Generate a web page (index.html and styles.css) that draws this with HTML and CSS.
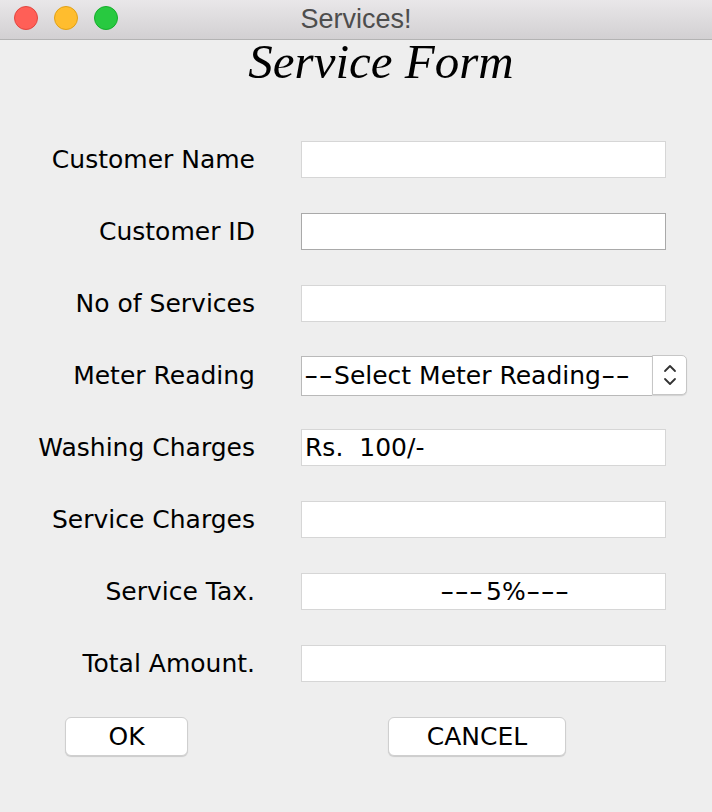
FILE: index.html
```html
<!DOCTYPE html>
<html lang="en">
<head>
    <meta charset="UTF-8">
    <meta name="viewport" content="width=device-width, initial-scale=1.0">
    <title>Services!</title>
    <link rel="stylesheet" href="styles.css">
</head>
<body>
    <div class="window">
        <div class="titlebar">
            <div class="lights">
                <span class="light red"></span>
                <span class="light yellow"></span>
                <span class="light green"></span>
            </div>
            <div class="window-title">Services!</div>
        </div>

        <h1 class="form-title">Service Form</h1>

        <form class="service-form">
            <label for="custName">Customer Name</label>
            <input type="text" id="custName" class="field">

            <label for="custId">Customer ID</label>
            <input type="text" id="custId" class="field focused">

            <label for="numServices">No of Services</label>
            <input type="text" id="numServices" class="field">

            <label for="meter">Meter Reading</label>
            <div class="combo" id="meter">
                <span class="combo-value"><span class="dash">--</span>Select Meter Reading<span class="dash">--</span></span>
                <span class="combo-arrow">
                    <svg width="14" height="26" viewBox="0 0 14 26">
                        <path d="M2 9 L7 4 L12 9" fill="none" stroke="#333" stroke-width="1.8" stroke-linecap="round" stroke-linejoin="round"/>
                        <path d="M2 17 L7 22 L12 17" fill="none" stroke="#333" stroke-width="1.8" stroke-linecap="round" stroke-linejoin="round"/>
                    </svg>
                </span>
            </div>

            <label for="washing">Washing Charges</label>
            <input type="text" id="washing" class="field" value="Rs.  100/-">

            <label for="serviceCharges">Service Charges</label>
            <input type="text" id="serviceCharges" class="field">

            <label for="tax">Service Tax.</label>
            <div class="field tax" id="tax"><span class="dash">---</span>5%<span class="dash">---</span></div>

            <label for="total">Total Amount.</label>
            <input type="text" id="total" class="field">
        </form>

        <div class="actions">
            <button type="button" class="btn btn-ok">OK</button>
            <button type="button" class="btn btn-cancel">CANCEL</button>
        </div>
    </div>
</body>
</html>
```

FILE: styles.css
```css
body {
    margin: 0;
    background-color: #eeeeee;
    font-family: "DejaVu Sans", sans-serif;
    color: #000;
}
.window {
    width: 712px;
    height: 812px;
    background-color: #eeeeee;
}
.titlebar {
    position: relative;
    height: 39px;
    background: linear-gradient(#e9e7e9, #d2d0d2);
    border-bottom: 1px solid #b3b3b3;
    display: flex;
    align-items: center;
    justify-content: center;
}
.lights {
    position: absolute;
    left: 14px;
    top: 6px;
    display: flex;
    gap: 16px;
}
.light {
    width: 24px;
    height: 24px;
    border-radius: 50%;
    box-sizing: border-box;
}
.red {
    background: #ff5f57;
    border: 1px solid #e2463f;
}
.yellow {
    background: #ffbd2e;
    border: 1px solid #e1a116;
}
.green {
    background: #28c940;
    border: 1px solid #14ae2a;
}
.window-title {
    font-family: "Liberation Sans", Arial, sans-serif;
    font-size: 27px;
    color: #4d4d4d;
}
.form-title {
    margin: -3px 0 0 0;
    padding-left: 50px;
    text-align: center;
    font-family: "Liberation Serif", "Times New Roman", serif;
    font-style: italic;
    font-weight: normal;
    font-size: 49px;
    line-height: 49px;
    height: 49px;
}
.service-form {
    display: grid;
    grid-template-columns: 255px 365px;
    column-gap: 46px;
    row-gap: 35px;
    grid-auto-rows: 37px;
    align-items: center;
    margin-top: 55px;
}
.service-form label {
    text-align: right;
    font-size: 25px;
}
.field {
    box-sizing: border-box;
    width: 365px;
    height: 37px;
    margin: 0;
    padding: 0 3px;
    border: 1px solid #d6d6d6;
    background: #fff;
    font-family: "DejaVu Sans", sans-serif;
    font-size: 25px;
    line-height: 35px;
    color: #000;
    outline: none;
    white-space: pre;
}
.field.focused {
    border-color: #a9a9a9;
}
.field.tax {
    padding-left: 138px;
}
/* the hyphens in the original font are much wider */
.dash {
    display: inline-block;
    transform: scaleX(1.6);
    transform-origin: left center;
}
.combo-value .dash {
    margin-right: 12px;
}
.tax .dash {
    margin-right: 19px;
}
.combo {
    display: flex;
    align-items: stretch;
    width: 386px;
    height: 41px;
}
.combo-value {
    box-sizing: border-box;
    width: 351px;
    height: 40px;
    margin-top: 1px;
    padding-left: 2px;
    border: 1px solid #b9b9b9;
    border-right: none;
    background: #fff;
    font-size: 25px;
    line-height: 38px;
    white-space: nowrap;
    overflow: hidden;
}
.combo-arrow {
    box-sizing: border-box;
    width: 35px;
    height: 40px;
    background: #fff;
    border: 1px solid #c6c6c6;
    border-radius: 0 5px 5px 0;
    box-shadow: 0 1px 1px rgba(0, 0, 0, 0.12);
    display: flex;
    align-items: center;
    justify-content: center;
}
.actions {
    display: flex;
    margin-top: 35px;
    padding-left: 65px;
}
.btn {
    height: 39px;
    background: #fff;
    border: 1px solid #cfcfcf;
    border-radius: 6px;
    box-shadow: 0 1px 1px rgba(0, 0, 0, 0.15);
    font-family: "DejaVu Sans", sans-serif;
    font-size: 25px;
    color: #000;
    padding: 0;
}
.btn-ok {
    width: 123px;
}
.btn-cancel {
    width: 178px;
    margin-left: 200px;
}
```
